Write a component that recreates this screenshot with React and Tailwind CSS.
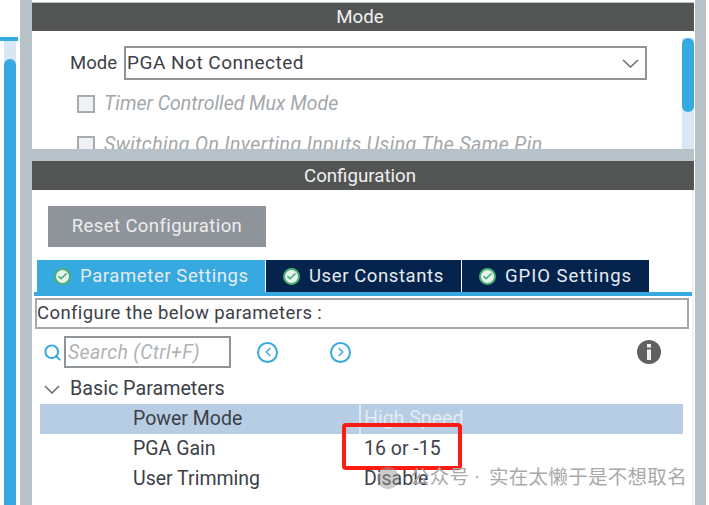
import { Search, ChevronLeft, ChevronRight, Check } from "lucide-react";

const font = { fontFamily: "Roboto, 'Noto Sans CJK SC', sans-serif" };

const Chevron = ({ w, h, className }) => (
  <svg width={w} height={h} viewBox={`0 0 ${w} ${h}`} fill="none" stroke="#6d7276" strokeWidth="1.6" className={className}>
    <polyline points={`1,1 ${w / 2},${h - 1} ${w - 1},1`} />
  </svg>
);

const Tab = ({ label, active, className, textClass = "tracking-[0.6px]" }) => (
  <div className={`flex items-center h-[32px] ${active ? "bg-[#36a9e0]" : "bg-[#04234d]"} ${className}`}>
    <span className="flex items-center justify-center w-[17px] h-[17px] rounded-full bg-[#e9f3ee] border-2 border-[#4caf72]">
      <Check size={11} strokeWidth={3.5} className="text-[#3fae6a]" />
    </span>
    <span className={`ml-[9px] text-[18.5px] leading-none whitespace-nowrap text-[#e6ebf0] ${textClass}`}>{label}</span>
  </div>
);

const Row = ({ name, value, selected }) => (
  <div className={`flex items-center h-[30px] ${selected ? "bg-[#b7cde4]" : ""}`}>
    <div className={`w-[321px] h-full flex items-center pl-[93px] text-[19.5px] ${selected ? "border-r-2 border-[#dfe9f3]" : ""} text-[#3c4048]`}>
      {name}
    </div>
    <div className={`pl-[3px] text-[19.5px] ${selected ? "text-[#e3ebf4]" : "text-[#3c4048]"}`}>{value}</div>
  </div>
);

export default function App() {
  return (
    <div className="relative flex w-[709px] h-[505px] overflow-hidden bg-white" style={font}>
      {/* left neighbour panel scrollbar */}
      <div className="w-[20px] pt-[37px]">
        <div className="h-[4px] w-[18px] bg-[#36a9e0]" />
        <div className="ml-[4px] w-[12px] h-[464px] bg-[#d9e6f4] pt-[18px]">
          <div className="h-full rounded-t-[6px] bg-[#36a9e0]" />
        </div>
      </div>
      <div className="w-[12px] bg-[#b7c2c8]" />

      <div className="w-[662px] flex flex-col">
        <div className="h-[2px] bg-white" />
        <div className="h-[1px] bg-[#b7c2c8]" />
        <div className="h-[28px] bg-[#535554] flex items-center justify-center pt-[1px] pr-[6px] text-[18.7px] text-[#f0f0f0]">Mode</div>

        {/* mode panel */}
        <div className="flex h-[118px] overflow-hidden">
          <div className="flex-1 pt-[15px]">
            <div className="flex items-center pl-[38px] h-[34px]">
              <span className="w-[54px] pt-[1px] text-[18.5px] text-[#3c4048]">Mode</span>
              <div className="w-[523px] h-[34px] border-2 border-[#8f9498] flex items-center justify-between pt-[1px] pr-[6px] text-[19px] tracking-[0.5px] text-[#3c4048]">
                <span className="pl-[1px]">PGA Not Connected</span>
                <Chevron w={17} h={9} className="mb-[1px]" />
              </div>
            </div>
            <div className="flex items-center mt-[15px] ml-[45px] h-[18px]">
              <span className="w-[18px] h-[18px] border-2 border-[#a6abaf] bg-[#eff1f4]" />
              <span className="ml-[9px] text-[19.5px] italic text-[#a3a7ab]">Timer Controlled Mux Mode</span>
            </div>
            <div className="flex items-center mt-[23px] ml-[45px] h-[18px]">
              <span className="w-[18px] h-[18px] border-2 border-[#a6abaf] bg-[#eff1f4]" />
              <span className="ml-[9px] text-[19.5px] italic whitespace-nowrap tracking-[0.4px] text-[#a3a7ab]">Switching On Inverting Inputs Using The Same Pin</span>
            </div>
          </div>
          <div className="w-[12px] bg-[#d9e6f4] mt-[7px]">
            <div className="h-[74px] rounded-[6px] bg-[#36a9e0]" />
          </div>
        </div>

        <div className="h-[12px] bg-[#b7c2c8]" />
        <div className="h-[29px] bg-[#535554] flex items-center justify-center pt-[1px] pr-[6px] text-[18.7px] text-[#f0f0f0]">Configuration</div>

        {/* configuration panel */}
        <div className="flex-1 flex">
          <div className="flex-1">
            <div className="ml-[16px] mt-[16px] w-[218px] h-[41px] bg-[#8e9499] flex items-center justify-center pt-[1px] text-[18.5px] tracking-[0.4px] text-[#eceef0]">
              Reset Configuration
            </div>
            <div className="flex mt-[13px] ml-[5px] gap-[1px]">
              <Tab label="Parameter Settings" active className="w-[228px] pl-[17px]" />
              <Tab label="User Constants" className="w-[195px] pl-[17px]" />
              <Tab label="GPIO Settings" className="w-[187px] pl-[17px]" textClass="tracking-[1px]" />
            </div>
            <div className="h-[4px] ml-[2px] w-[658px] bg-[#36a9e0]" />
            <div className="mt-[2px] ml-[3px] w-[654px] h-[31px] border-2 border-[#a3a8ac] flex items-center text-[18.5px] tracking-[0.4px] text-[#3c4048]">
              Configure the below parameters :
            </div>

            <div className="flex items-center mt-[7px] h-[32px]">
              <Search size={19} strokeWidth={2.5} className="ml-[11px] mt-[1px] text-[#36a9e0]" />
              <div className="ml-[2px] w-[167px] h-[32px] border-2 border-[#8f9498] flex items-center pl-[2px] pt-[1px] text-[19.5px] italic tracking-[0.35px] text-[#b0b3b6]">
                Search (Ctrl+F)
              </div>
              <span className="ml-[26px] w-[21px] h-[21px] rounded-full border-2 border-[#36a9e0] flex items-center justify-center">
                <ChevronLeft size={14} strokeWidth={2.5} className="text-[#36a9e0]" />
              </span>
              <span className="ml-[52px] w-[21px] h-[21px] rounded-full border-2 border-[#36a9e0] flex items-center justify-center">
                <ChevronRight size={14} strokeWidth={2.5} className="text-[#36a9e0]" />
              </span>
              <span className="ml-[286px] w-[24px] h-[24px] rounded-full bg-[#5f6163] flex items-center justify-center">
                <svg width="6" height="16" viewBox="0 0 6 16">
                  <rect x="1" y="0" width="4" height="3.5" fill="#f2f2f2" />
                  <rect x="1" y="5.5" width="4" height="10.5" fill="#f2f2f2" />
                </svg>
              </span>
            </div>

            <div className="flex items-center h-[36px] pt-[6px] ml-[12px]">
              <Chevron w={16} h={9} />
              <span className="ml-[10px] text-[19.7px] text-[#3c4048]">Basic Parameters</span>
            </div>

            <div className="ml-[8px] w-[643px]">
              <Row name="Power Mode" value="High Speed" selected />
              <Row name="PGA Gain" value="16 or -15" />
              <Row name="User Trimming" value="Disable" />
            </div>
          </div>
          <div className="w-[5px] bg-[#f0f2f5]" />
        </div>
      </div>

      <div className="w-[1px]" />
      <div className="w-[11px] bg-[#b7c2c8]" />

      {/* red highlight box */}
      <div className="absolute left-[342px] top-[423px] w-[120px] h-[47px] border-[4px] border-[#ff1a12] rounded-[4px]" />
      {/* watermark */}
      <div className="absolute left-[377px] top-[465px] flex items-center h-[26px] text-[#a9a9a9]">
        <span className="w-[22px] h-[22px] rounded-full bg-[#9a9a9a]/50" />
        <span className="ml-[11px] text-[19.5px] whitespace-nowrap tracking-[0.3px]">公众号 ·</span>
        <span className="ml-[9px] text-[19.5px] whitespace-nowrap tracking-[0.3px]">实在太懒于是不想取名</span>
      </div>
    </div>
  );
}
